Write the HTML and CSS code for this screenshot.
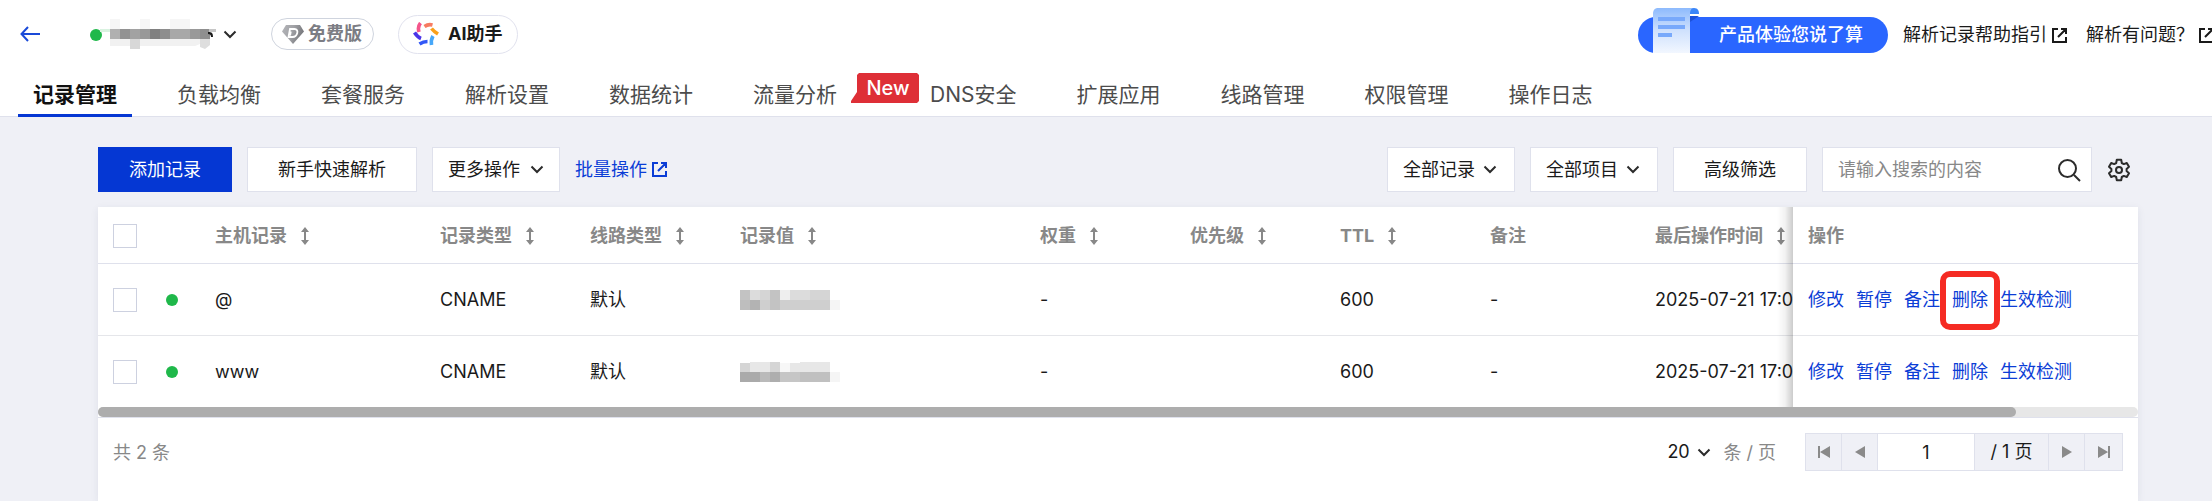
FILE: index.html
```html
<!DOCTYPE html>
<html lang="zh-CN">
<head>
<meta charset="utf-8">
<title>记录管理</title>
<link rel="stylesheet" href="styles.css">
</head>
<body>
<svg class="sprite" aria-hidden="true">
  <symbol id="chevron" viewBox="0 0 14 9"><path d="M1.5 1.5 7 7l5.500-5.500" fill="none" stroke="currentColor" stroke-width="2"/></symbol>
  <symbol id="sort" viewBox="0 0 8 18"><path d="M4 0 8 5H5v8h3l-4 5-4-5h3V5H0z" fill="currentColor"/></symbol>
  <symbol id="external" viewBox="0 0 15 15"><path d="M6 1H1v13h13V9M6 9l7-7M9 1h5v5" fill="none" stroke="currentColor" stroke-width="2"/></symbol>
</svg>
<header class="header">
  <div class="topbar">
    <div class="topbar-left">
      <a class="back" href="#" aria-label="返回"><svg width="20" height="16" viewBox="0 0 20 16"><path d="M8 1 1.500 8 8 15M1.500 8H20" fill="none" stroke="currentColor" stroke-width="2"/></svg></a>
      <button class="domain" type="button" aria-label="切换域名">
        <svg width="126" height="32" viewBox="0 0 126 32">
          <circle cx="6" cy="17" r="6" fill="#1fb84a"/>
          <path d="M10 11h10v3H10z" fill="#d9f2e0"/>
          <g fill="#f6f6f6"><path d="M20 1h10v10H20zM50 1h10v10H50zM80 1h20v10H80z"/><path d="M20 21h90v5l-5 2H20z" fill="#f1f1f1"/></g>
          <path d="M40 21h10v10H40z" fill="#d8d8d8"/><path d="M110 21h10v6l-5 4-5-2z" fill="#dedede"/>
          <path d="M20 11h10v10H20z" fill="#b0b0b0"/><path d="M30 11h10v10H30z" fill="#929292"/><path d="M40 11h10v10H40z" fill="#a2a2a2"/><path d="M50 11h10v10H50z" fill="#989898"/><path d="M60 11h10v10H60z" fill="#808080"/><path d="M70 11h10v10H70z" fill="#8e8e8e"/><path d="M80 11h20v10H80z" fill="#a8a8a8"/><path d="M100 11h10v10h-10z" fill="#999"/><path d="M110 11h10v10h-10z" fill="#8f8f8f"/>
          <path d="M119 11h7v3h-7z" fill="#c6c6c6"/><path d="M118 14c4 0 5 1 5 5h-2c0-2-1-3-3-3z" fill="#1a1a1a"/>
        </svg>
        <svg class="chevron" width="14" height="9"><use href="#chevron"/></svg>
      </button>
      <span class="plan"><svg width="22" height="19" viewBox="0 0 22 19"><defs><linearGradient id="gem" x2="1" y2=".3"><stop stop-color="#b4b5b9"/><stop offset=".5" stop-color="#a2a3a7"/><stop offset="1" stop-color="#77787c"/></linearGradient></defs><path d="M4 0h14l4 6.500L11 19 0 6.500z" fill="url(#gem)"/><path d="M8 4h4.500c5 0 3 8-2 8H6.500zM8.800 6.500l-.8 4" fill="none" stroke="#fff" stroke-width="1.800"/></svg>免费版</span>
      <button class="ai" type="button"><svg width="26" height="24" viewBox="0 0 26 24" fill="none" stroke-width="3.600"><path d="M6 10c-1-3-1-6 1.500-9" stroke="#f4558b"/><path d="M11.500 4.500c2.500-1.800 5-2.300 8-1.500" stroke="#f77b61"/><path d="M18.500 6.500c2 2.500 4 4 6.500 5.500" stroke="#f9a01b"/><path d="M20 14c-1.500 2.500-2 5-1.500 9" stroke="#46a7f9"/><path d="M14.500 19.500c-2.500 0-5 .5-8 2.500" stroke="#3157f6"/><path d="M8 16.500c-2.500-1-4.500-3-6.500-6" stroke="#4a35e8"/></svg>AI助手</button>
    </div>
    <div class="topbar-right">
      <a class="survey" href="#"><svg width="46" height="45" viewBox="0 0 46 45"><defs><linearGradient id="paper" x2="0" y2="1"><stop stop-color="#8dbafd"/><stop offset=".5" stop-color="#cfe1fd"/><stop offset="1" stop-color="#f2f7ff"/></linearGradient></defs><path d="M37 8h9l-9 6z" fill="#1d51d8"/><path d="M36 0h5c4 0 5 3 5 6h-9z" fill="#3b86f9"/><path d="M0 45V6c0-4 2-6 5-6h36c-3 0-4 3-4 6v39z" fill="url(#paper)"/><path d="M5 9h27v4H5zM5 17h27v4H5zM5 25h14v4H5z" fill="#78a9fb"/></svg>产品体验您说了算</a>
      <a class="help" href="#">解析记录帮助指引<svg width="15" height="15"><use href="#external"/></svg></a>
      <a class="help" href="#">解析有问题？<svg width="15" height="15"><use href="#external"/></svg></a>
    </div>
  </div>
  <nav class="tabs">
    <a class="tab active" href="#" aria-current="page">记录管理</a>
    <a class="tab" href="#">负载均衡</a>
    <a class="tab" href="#">套餐服务</a>
    <a class="tab" href="#">解析设置</a>
    <a class="tab" href="#">数据统计</a>
    <a class="tab has-badge" href="#">流量分析</a>
    <span class="badge">New</span>
    <a class="tab" href="#">DNS安全</a>
    <a class="tab" href="#">扩展应用</a>
    <a class="tab" href="#">线路管理</a>
    <a class="tab" href="#">权限管理</a>
    <a class="tab" href="#">操作日志</a>
  </nav>
</header>
<main class="main">
  <div class="toolbar">
    <div class="tools">
      <button class="btn primary" type="button">添加记录</button>
      <button class="btn wide" type="button">新手快速解析</button>
      <button class="btn drop" type="button">更多操作<svg class="chevron" width="14" height="9"><use href="#chevron"/></svg></button>
      <a class="batch" href="#">批量操作<svg width="15" height="15"><use href="#external"/></svg></a>
    </div>
    <div class="tools">
      <div class="picker"><select class="btn" aria-label="记录筛选"><option>全部记录</option></select><svg class="chevron" width="14" height="9"><use href="#chevron"/></svg></div>
      <div class="picker"><select class="btn" aria-label="项目筛选"><option>全部项目</option></select><svg class="chevron" width="14" height="9"><use href="#chevron"/></svg></div>
      <button class="btn filter" type="button">高级筛选</button>
      <div class="search-group">
        <form class="search"><input type="search" placeholder="请输入搜索的内容" aria-label="请输入搜索的内容"><button class="icon-btn" type="submit" aria-label="搜索"><svg width="24" height="24" viewBox="0 0 24 24" fill="none" stroke="currentColor" stroke-width="2"><circle cx="10.500" cy="10.500" r="8.500"/><path d="m17 17 6 6"/></svg></button></form>
        <button class="icon-btn settings" type="button" aria-label="设置"><svg width="24" height="24" viewBox="0 0 24 24" fill="none" stroke="currentColor" stroke-width="2" stroke-linejoin="round"><path d="M9.800 1.800h4.400l.6 3.200 2 1.100 3-1.100 2.200 3.800-2.400 2.100v2.200l2.400 2.100-2.200 3.800-3-1.100-2 1.100-.6 3.200H9.800L9.200 19l-2-1.100-3 1.100L2 15.200l2.400-2.100v-2.200L2 8.800 4.200 5l3 1.100 2-1.100z"/><circle cx="12" cy="12" r="3"/></svg></button>
      </div>
    </div>
  </div>
  <section class="panel">
    <div class="table-wrap">
      <table class="records">
        <colgroup><col class="c-check"><col class="c-state"><col class="c-host"><col class="c-md"><col class="c-md"><col class="c-value"><col class="c-md"><col class="c-md"><col class="c-md"><col class="c-note"><col class="c-time"><col class="c-ops"></colgroup>
        <thead>
          <tr>
            <th><input type="checkbox" aria-label="全选"></th>
            <th></th>
            <th>主机记录<svg class="sort" width="8" height="18"><use href="#sort"/></svg></th>
            <th>记录类型<svg class="sort" width="8" height="18"><use href="#sort"/></svg></th>
            <th>线路类型<svg class="sort" width="8" height="18"><use href="#sort"/></svg></th>
            <th>记录值<svg class="sort" width="8" height="18"><use href="#sort"/></svg></th>
            <th>权重<svg class="sort" width="8" height="18"><use href="#sort"/></svg></th>
            <th>优先级<svg class="sort" width="8" height="18"><use href="#sort"/></svg></th>
            <th>TTL<svg class="sort" width="8" height="18"><use href="#sort"/></svg></th>
            <th>备注</th>
            <th>最后操作时间<svg class="sort" width="8" height="18"><use href="#sort"/></svg></th>
            <th class="ops">操作</th>
          </tr>
        </thead>
        <tbody>
          <tr>
            <td><input type="checkbox" aria-label="选择 @"></td>
            <td><span class="dot"></span></td>
            <td>@</td><td>CNAME</td><td>默认</td>
            <td><svg class="mosaic" width="100" height="20" viewBox="0 0 100 20" shape-rendering="crispEdges"><path fill="#c3c3c3" d="M0 0h10v10H0zM30 0h10v20H30z"/><path fill="#dcdcdc" d="M10 0h10v10H10zM50 0h20v10H50z"/><path fill="#d5d5d5" d="M20 0h10v10H20zM70 0h20v10H70z"/><path fill="#eee" d="M40 0h10v10H40z"/><path fill="#bebebe" d="M0 10h10v10H0z"/><path fill="#b3b3b3" d="M10 10h10v10H10z"/><path fill="#cfcfcf" d="M20 10h10v10H20zM40 10h50v10H40z"/><path fill="#f5f5f5" d="M90 10h10v10H90z"/></svg></td>
            <td>-</td><td></td><td>600</td><td>-</td><td>2025-07-21 17:0</td>
            <td class="ops"><div class="actions"><a href="#">修改</a><a href="#">暂停</a><a href="#">备注</a><a class="marked" href="#">删除</a><a href="#">生效检测</a></div></td>
          </tr>
          <tr>
            <td><input type="checkbox" aria-label="选择 www"></td>
            <td><span class="dot"></span></td>
            <td>www</td><td>CNAME</td><td>默认</td>
            <td><svg class="mosaic" width="100" height="20" viewBox="0 0 100 20" shape-rendering="crispEdges"><path fill="#d5d5d5" d="M0 1h10v9H0zM30 0h10v10H30z"/><path fill="#e7e7e7" d="M10 0h20v10H10zM50 1l20-1h20v10H50z"/><path fill="#f7f7f7" d="M40 1h10v9H40z"/><path fill="#aaa" d="M0 10h20v10H0z"/><path fill="#bababa" d="M20 10h10v10H20z"/><path fill="#aeaeae" d="M30 10h10v10H30z"/><path fill="#c6c6c6" d="M40 10h20v10H40z"/><path fill="#c0c0c0" d="M60 10h30v10H60z"/><path fill="#f5f5f5" d="M90 10h10v10H90z"/></svg></td>
            <td>-</td><td></td><td>600</td><td>-</td><td>2025-07-21 17:0</td>
            <td class="ops"><div class="actions"><a href="#">修改</a><a href="#">暂停</a><a href="#">备注</a><a href="#">删除</a><a href="#">生效检测</a></div></td>
          </tr>
        </tbody>
      </table>
    </div>
    <div class="scrollbar"><div class="thumb" style="width:94%"></div></div>
    <footer class="footer">
      <span class="muted">共 2 条</span>
      <div class="paging">
        <div class="size"><select aria-label="每页条数"><option>20</option></select><svg class="chevron" width="14" height="9"><use href="#chevron"/></svg></div>
        <span class="muted">条 / 页</span>
        <div class="pager">
          <button type="button" aria-label="首页" disabled><svg width="12" height="12" viewBox="0 0 12 12"><path d="M0 0h2v12H0zM12 0v12L2 6z" fill="currentColor"/></svg></button>
          <button type="button" aria-label="上一页" disabled><svg width="12" height="12" viewBox="0 0 12 12"><path d="M11 0v12L1 6z" fill="currentColor"/></svg></button>
          <input type="text" value="1" aria-label="页码">
          <span class="total">/ 1 页</span>
          <button type="button" aria-label="下一页" disabled><svg width="12" height="12" viewBox="0 0 12 12"><path d="M1 0v12l10-6z" fill="currentColor"/></svg></button>
          <button type="button" aria-label="末页" disabled><svg width="12" height="12" viewBox="0 0 12 12"><path d="M10 0h2v12h-2zM0 0v12l10-6z" fill="currentColor"/></svg></button>
        </div>
      </div>
    </footer>
  </section>
</main>
</body>
</html>
```

FILE: styles.css
```css
* { box-sizing: border-box; }
html, body { height: 100%; }
body {
  margin: 0;
  display: flex;
  flex-direction: column;
  background: #eff0f6;
  color: #1a1a1a;
  font: 18px/24px Inter, "Noto Sans CJK SC", sans-serif;
  overflow: hidden;
}
a { color: inherit; text-decoration: none; }
button, input, select { font: inherit; color: inherit; margin: 0; border-radius: 0; }
button { cursor: pointer; padding: 0; }
svg { flex: none; display: block; }
.sprite { position: absolute; width: 0; height: 0; }
.chevron { color: #2b2b2b; }

.header { flex: none; background: #fff; overflow: hidden; }
.topbar { display: flex; justify-content: space-between; align-items: center; height: 68px; padding-left: 20px; }
.topbar-left { display: flex; align-items: center; white-space: nowrap; }
.back { color: #1a4ad8; }
.domain { display: flex; align-items: center; gap: 7px; border: 0; background: none; margin: 0 34px 0 50px; }
.plan, .ai { display: flex; align-items: center; border-radius: 20px; font-weight: 700; background: #fff; }
.plan { height: 32px; gap: 4px; padding: 0 11px 0 10px; border: 1px solid #cfd4de; color: #7c7d84; }
.ai { height: 39px; gap: 9px; padding: 0 14px; border: 1px solid #e1e2ee; margin-left: 24px; }
.topbar-right { display: flex; align-items: center; padding-top: 2px; margin-right: -2px; white-space: nowrap; }
.survey { display: flex; align-items: flex-end; gap: 20px; height: 36px; margin-right: 15px; padding: 0 25px 0 15px; border-radius: 18px; background: #2a66ff; color: #fff; line-height: 36px; font-weight: 500; }
.help { display: flex; align-items: center; gap: 5px; }
.help + .help { margin-left: 19px; }

.tabs { display: flex; gap: 30px; height: 49px; padding: 0 18px; border-bottom: 1px solid #dfe1ec; white-space: nowrap; }
.tab { height: 49px; padding: 6px 15px 0; border-bottom: 3px solid transparent; font-size: 21px; line-height: 42px; color: #4c4c4c; }
.tab.active { border-color: #0537d3; color: #111; font-weight: 700; }
.has-badge { margin-right: -31px; }
.badge { width: 68px; height: 30px; margin: 5px -34px 0 0; padding-left: 6px; background: #de2f37; clip-path: polygon(6px 2px, 8px 0, 66px 0, 68px 2px, 68px 28px, 66px 30px, 0 30px, 0 28px, 6px 19px); color: #fff; font-size: 20px; line-height: 31px; font-weight: 500; text-align: center; }

.main { flex: 1; display: flex; flex-direction: column; gap: 15px; padding: 30px 74px 0 98px; min-height: 0; }
.toolbar { display: flex; justify-content: space-between; white-space: nowrap; }
.tools { display: flex; gap: 15px; }
.btn { height: 45px; border: 1px solid #dfe1ec; background: #fff; text-align: center; }
.primary { width: 134px; border-color: #0537d3; background: #0537d3; color: #fff; }
.wide { width: 170px; }
.drop { width: 128px; display: flex; align-items: center; justify-content: center; gap: 10px; }
.filter { width: 134px; }
.batch { display: flex; align-items: center; gap: 5px; color: #0b3dd6; }
.picker, .size { display: grid; align-items: center; }
.picker > *, .size > * { grid-area: 1 / 1; }
.picker .chevron, .size .chevron { justify-self: end; pointer-events: none; }
.picker select { width: 128px; padding: 0 15px; appearance: none; text-align: left; }
.picker .chevron { margin-right: 18px; }
.search-group { display: flex; gap: 8px; }
.search { display: flex; align-items: center; width: 270px; height: 45px; border: 1px solid #dfe1ec; background: #fff; }
.search input { flex: 1; min-width: 0; border: 0; outline: 0; padding: 0 15px; background: none; appearance: none; }
.search input::placeholder { color: #888; }
.icon-btn { display: grid; place-items: center; border: 0; background: none; color: #2b2b2b; }
.search .icon-btn { width: 44px; }
.settings { width: 38px; }

.panel { flex: 1; background: #fff; box-shadow: 0 2px 8px rgba(40, 50, 90, .08); }
.table-wrap { overflow-x: auto; scrollbar-width: none; }
.records { width: 2172px; table-layout: fixed; border-collapse: separate; border-spacing: 0; }
.c-check { width: 53px; }
.c-state { width: 49px; }
.c-host { width: 225px; }
.c-md { width: 150px; }
.c-value { width: 300px; }
.c-note { width: 165px; }
.c-time { width: 285px; }
.c-ops { width: 345px; }
.records th, .records td { padding: 0 15px; text-align: left; white-space: nowrap; }
.records th { height: 57px; padding-top: 1px; border-bottom: 1px solid #dfe1ec; color: #888; font-weight: 700; }
.records td { height: 72px; border-bottom: 1px solid #e5e6ea; }
.records tbody tr:last-child td { height: 71px; border-bottom: 0; }
.records .ops { position: sticky; right: 0; background: #fff; }
.ops::before { content: ""; position: absolute; right: 100%; top: 0; bottom: -1px; width: 16px; background: linear-gradient(to left, rgba(0, 0, 0, .2), rgba(0, 0, 0, .05) 50%, transparent); }
.sort { display: inline-block; vertical-align: -3px; margin-left: 14px; }
.records input { display: block; appearance: none; width: 24px; height: 24px; border: 1px solid #cdd1e0; background: #fff; }
.dot { display: block; width: 12px; height: 12px; border-radius: 50%; background: #1fb84a; }
.actions { display: flex; gap: 12px; color: #0b3dd6; }
.marked { position: relative; }
.marked::after { content: ""; position: absolute; inset: -17px -12px -18px; border: 6px solid #f52b23; border-radius: 10px; }

.scrollbar { height: 10px; border-radius: 5px; background: #e7e7e7; }
.thumb { height: 10px; border-radius: 5px; background: #adadad; }
.footer { display: flex; justify-content: space-between; align-items: center; padding: 15px 15px 0; border-top: 1px solid #dfe1ec; }
.muted { color: #888; padding-top: 2px; }
.paging { display: flex; align-items: center; gap: 12px; }
.size select { width: 44px; border: 0; padding: 0; background: none; appearance: none; }
.pager { display: flex; margin-left: 17px; }
.pager > * { height: 38px; border: 1px solid #dfe1ec; background: #eff0f6; }
.pager > * + * { border-left: 0; }
.pager button { display: grid; place-items: center; width: 36px; color: #8a8a8a; }
.pager button:first-child { width: 37px; }
.pager button:last-child { width: 38px; }
.pager input { width: 97px; padding: 0; background: #fff; text-align: center; }
.total { width: 74px; line-height: 36px; text-align: center; }
```
